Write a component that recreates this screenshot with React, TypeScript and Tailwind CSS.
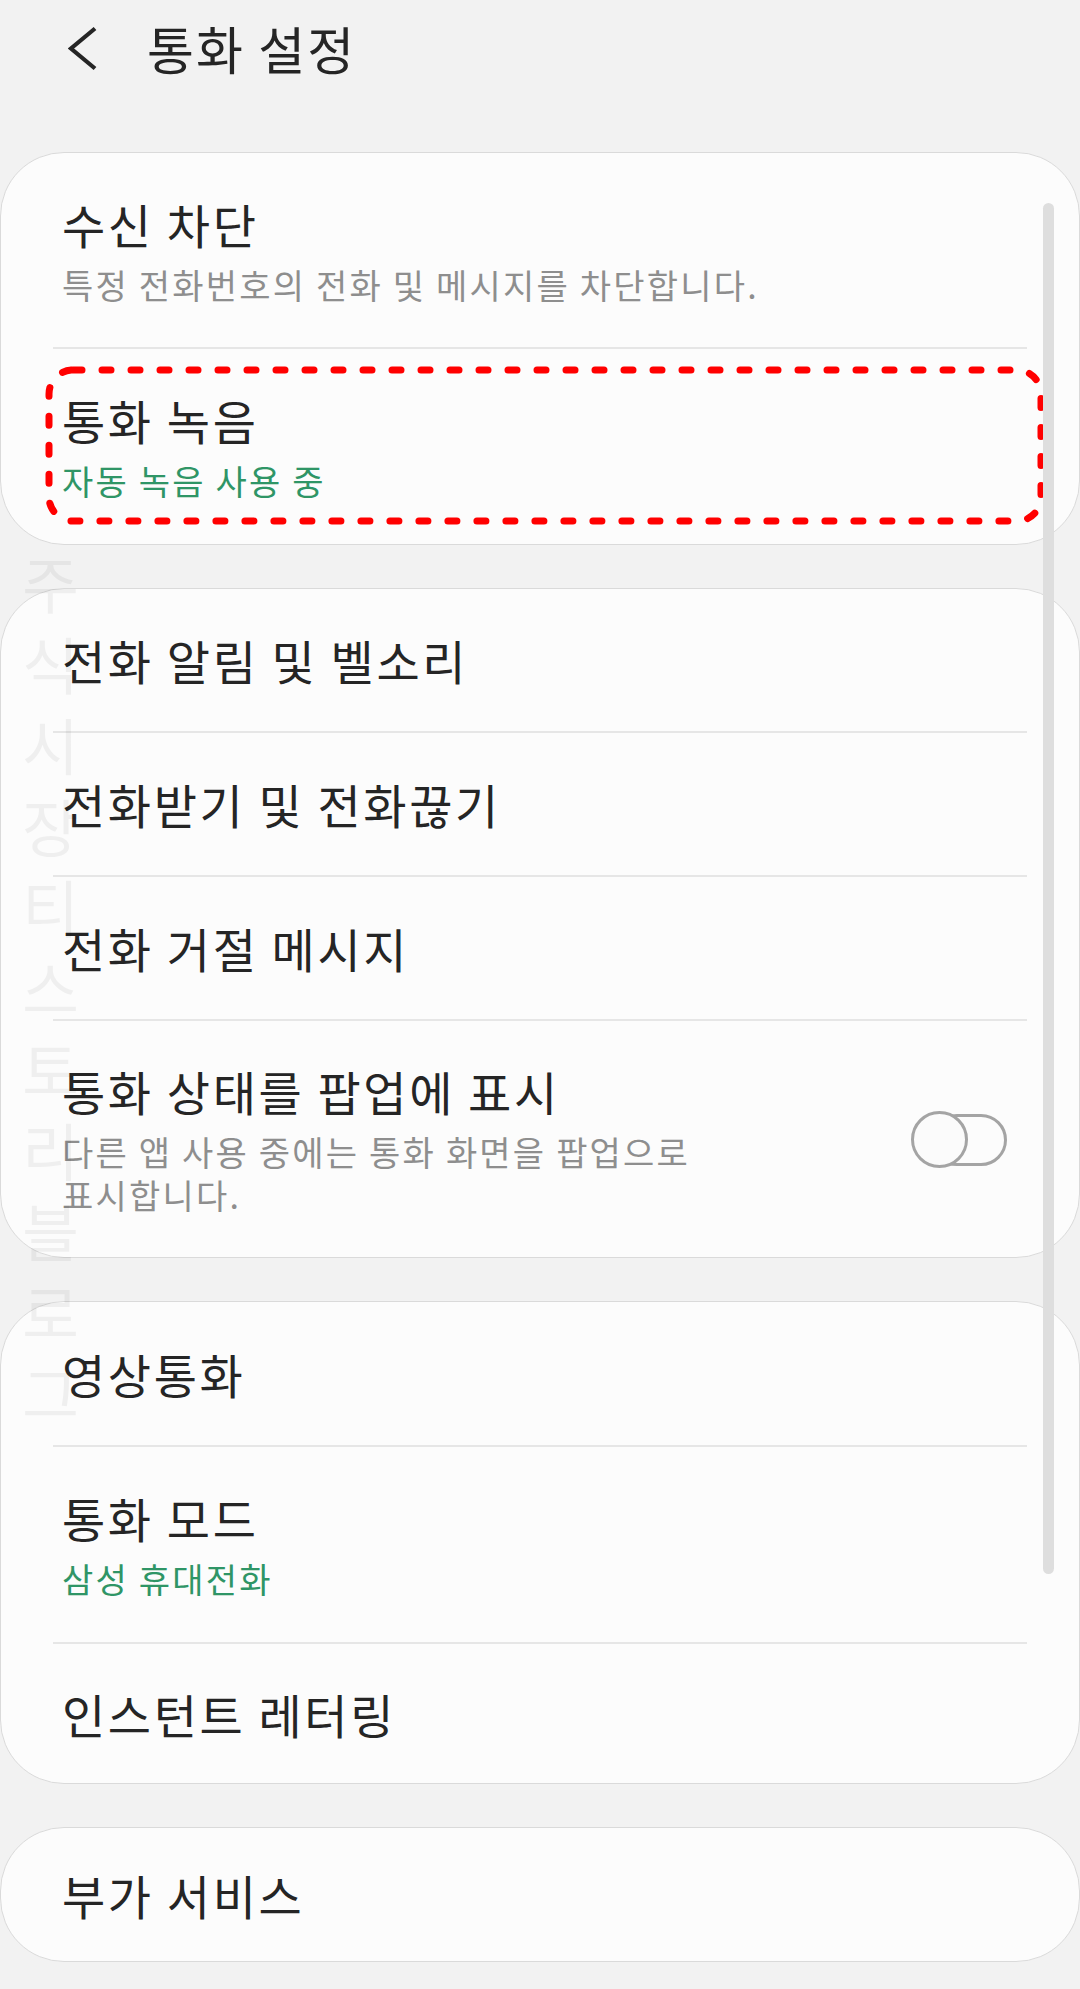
import React from 'react';

const FONT = { fontFamily: '"Noto Sans CJK KR", "Noto Sans", sans-serif' };

const WATERMARK = ['주', '식', '시', '장', '티', '스', '토', '리', '블', '로', '그'];

function Divider() {
  return <div className="mx-[52px] h-[2px] bg-[#e6e6e6]" />;
}

function Row({
  title,
  sub,
  subColor = 'gray',
  height,
  children,
}: {
  title: string;
  sub?: React.ReactNode;
  subColor?: 'gray' | 'green';
  height: string;
  children?: React.ReactNode;
}) {
  return (
    <div className={`flex items-center pl-[61px] pr-[72px] ${height}`}>
      <div className="flex-1">
        <div className="text-[47px] leading-[58px] tracking-[2.6px] text-[#252525]">{title}</div>
        {sub && (
          <div
            className={`mt-[10px] text-[34px] leading-[43px] tracking-[2.2px] ${
              subColor === 'green' ? 'text-[#2f9566]' : 'text-[#8e8e8e]'
            }`}
          >
            {sub}
          </div>
        )}
      </div>
      {children}
    </div>
  );
}

function Card({ children }: { children: React.ReactNode }) {
  return (
    <div className="relative rounded-[64px] border border-[#dadada] bg-[#fcfcfc] overflow-hidden">
      {children}
    </div>
  );
}

function Toggle() {
  return (
    <div className="relative h-[57px] w-[96px]">
      <div className="absolute left-[20px] right-0 top-[3px] h-[52px] rounded-full border-[3px] border-[#a4a4a4]" />
      <div className="absolute left-0 top-0 h-[57px] w-[57px] rounded-full border-[3px] border-[#a4a4a4] bg-[#fbfbfb]" />
    </div>
  );
}

export default function App() {
  return (
    <div className="relative min-h-[1989px] w-[1080px] bg-[#f2f2f2]" style={FONT}>
      {/* header */}
      <div className="flex h-[96px] items-center">
        <svg className="ml-[68px] h-[45px] w-[30px]" viewBox="0 0 30 45" fill="none">
          <polyline
            points="27,2.5 3,22.5 27,42.5"
            stroke="#252525"
            strokeWidth="4.2"
            strokeLinecap="butt"
            strokeLinejoin="miter"
          />
        </svg>
        <h1 className="ml-[49px] text-[51px] leading-[60px] tracking-[2px] text-[#252525]">통화 설정</h1>
      </div>

      <div className="mt-[56px] flex flex-col gap-[43px]">
        <Card>
          <Row title="수신 차단" sub="특정 전화번호의 전화 및 메시지를 차단합니다." height="h-[194px]" />
          <Divider />
          <div className="relative">
            <Row title="통화 녹음" sub="자동 녹음 사용 중" subColor="green" height="h-[195px]" />
            <svg
              className="pointer-events-none absolute left-[44px] right-[36px] top-[17px] bottom-[19px]"
              width="1000"
              height="159"
              viewBox="0 0 1000 159"
              fill="none"
            >
              <rect
                x="4"
                y="4"
                width="992"
                height="151"
                rx="24"
                stroke="#ff0000"
                strokeWidth="7"
                strokeDasharray="9 20"
                strokeLinecap="round"
              />
            </svg>
          </div>
        </Card>

        <Card>
          <Row title="전화 알림 및 벨소리" height="h-[142px]" />
          <Divider />
          <Row title="전화받기 및 전화끊기" height="h-[142px]" />
          <Divider />
          <Row title="전화 거절 메시지" height="h-[142px]" />
          <Divider />
          <Row
            title="통화 상태를 팝업에 표시"
            sub={
              <>
                다른 앱 사용 중에는 통화 화면을 팝업으로
                <br />
                표시합니다.
              </>
            }
            height="h-[236px]"
          >
            <Toggle />
          </Row>
        </Card>

        <Card>
          <Row title="영상통화" height="h-[143px]" />
          <Divider />
          <Row title="통화 모드" sub="삼성 휴대전화" subColor="green" height="h-[195px]" />
          <Divider />
          <Row title="인스턴트 레터링" height="h-[139px]" />
        </Card>

        <Card>
          <Row title="부가 서비스" height="h-[133px]" />
        </Card>
      </div>

      {/* scrollbar */}
      <div className="pointer-events-none absolute left-[1043px] top-[203px] h-[1371px] w-[11px] rounded-full bg-[#dedede]" />

      {/* watermark */}
      <div className="pointer-events-none absolute left-[22px] top-[542px] flex flex-col text-[62px] leading-[81px] text-black/[0.05]">
        {WATERMARK.map((ch, i) => (
          <span key={i}>{ch}</span>
        ))}
      </div>
    </div>
  );
}
